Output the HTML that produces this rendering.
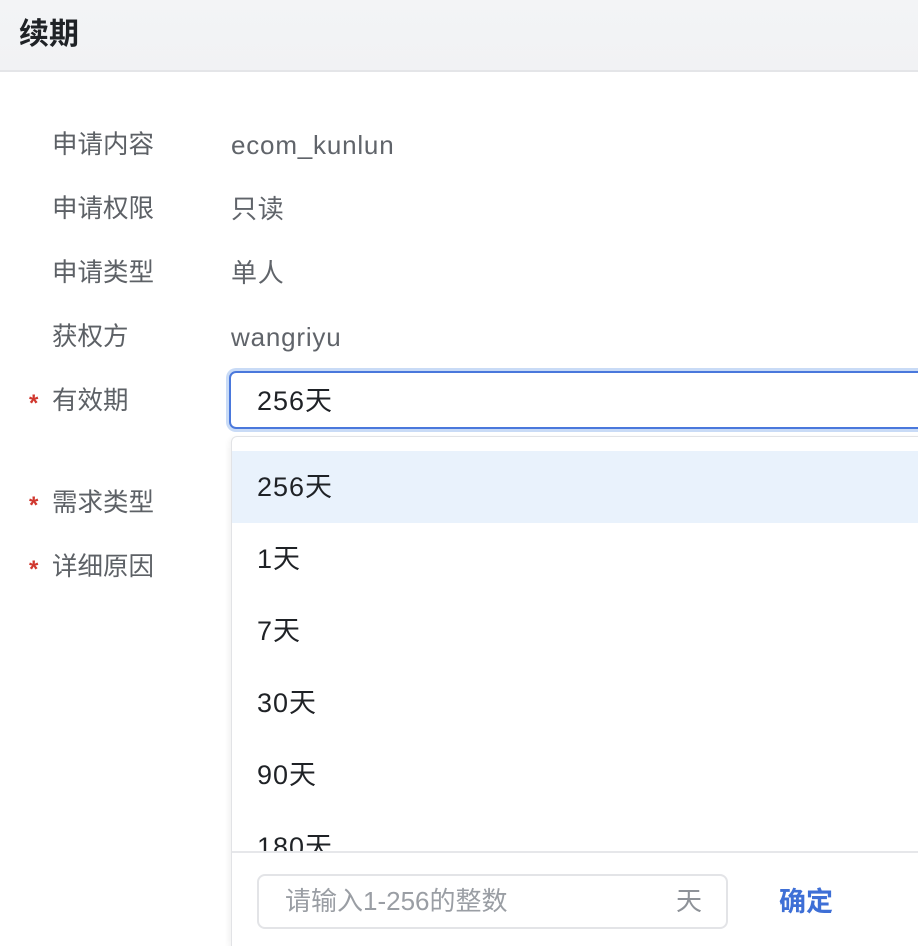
<!DOCTYPE html>
<html><head><meta charset="utf-8"><style>
*{margin:0;padding:0;box-sizing:border-box}
html,body{width:918px;height:946px;overflow:hidden}
body{background:#fff;font-family:"Liberation Sans","Noto Sans CJK SC",sans-serif;position:relative}
.hd{position:absolute;left:0;top:0;width:918px;height:72px;background:linear-gradient(#f3f4f6,#f1f2f4);border-bottom:2px solid #e4e5e8}
.hd span{position:absolute;left:19px;top:9px;font-size:30px;font-weight:bold;color:#1f2226}
.t{position:absolute;font-size:25.5px;line-height:32px;white-space:nowrap}
.l{left:52px;color:#5d6166}
.v{left:231px;color:#60646a;font-size:26px;letter-spacing:0.8px}
.s{position:absolute;left:29px;color:#d0372e;font-size:24px;font-weight:bold}
.inp{position:absolute;left:229px;top:371px;width:700px;height:58px;border:2px solid #4a78dc;border-radius:7px;box-shadow:0 0 0 3px #c9dbf6}
.dd{position:absolute;left:231px;top:436px;width:700px;height:510px;background:#fff;border:1px solid #e2e3e6;border-bottom:none;border-radius:6px 6px 0 0;box-shadow:-2px 2px 6px rgba(0,0,0,.06);overflow:hidden}
.it{position:absolute;left:0;width:700px;height:72px;padding-left:25px;font-size:27px;letter-spacing:1px;line-height:72px;color:#1f2226}
.ft{position:absolute;left:0;top:414px;width:700px;height:100px;background:#fff;border-top:2px solid #e6e7ea}
.fi{position:absolute;left:25px;top:21px;width:471px;height:55px;border:2px solid #e3e4e7;border-radius:8px;font-size:26px;color:#9a9ea4;line-height:51px;padding-left:26px}
.fi b{position:absolute;right:24px;top:0;font-weight:normal;color:#8e9298}
.ok{position:absolute;left:547px;top:27px;font-size:27px;font-weight:bold;color:#3e6fd6}
</style></head><body>
<div class="hd"><span>续期</span></div>
<div class="t l" style="top:129px">申请内容</div><div class="t v" style="top:129px">ecom_kunlun</div>
<div class="t l" style="top:193px">申请权限</div><div class="t v" style="top:193px">只读</div>
<div class="t l" style="top:257px">申请类型</div><div class="t v" style="top:257px">单人</div>
<div class="t l" style="top:321px">获权方</div><div class="t v" style="top:321px">wangriyu</div>
<div class="s" style="top:390px">*</div><div class="t l" style="top:385px">有效期</div>
<div class="s" style="top:492px">*</div><div class="t l" style="top:487px">需求类型</div>
<div class="s" style="top:556px">*</div><div class="t l" style="top:551px">详细原因</div>
<div class="inp"></div>
<div class="t" style="left:257px;top:385px;color:#1f2226;font-size:27px;letter-spacing:1px">256天</div>
<div class="dd">
<div class="it" style="top:14px;background:#e9f2fc">256天</div>
<div class="it" style="top:86px">1天</div>
<div class="it" style="top:158px">7天</div>
<div class="it" style="top:230px">30天</div>
<div class="it" style="top:302px">90天</div>
<div class="it" style="top:374px">180天</div>
<div class="ft"><div class="fi">请输入1-256的整数<b>天</b></div><div class="ok">确定</div></div>
</div>
</body></html>
